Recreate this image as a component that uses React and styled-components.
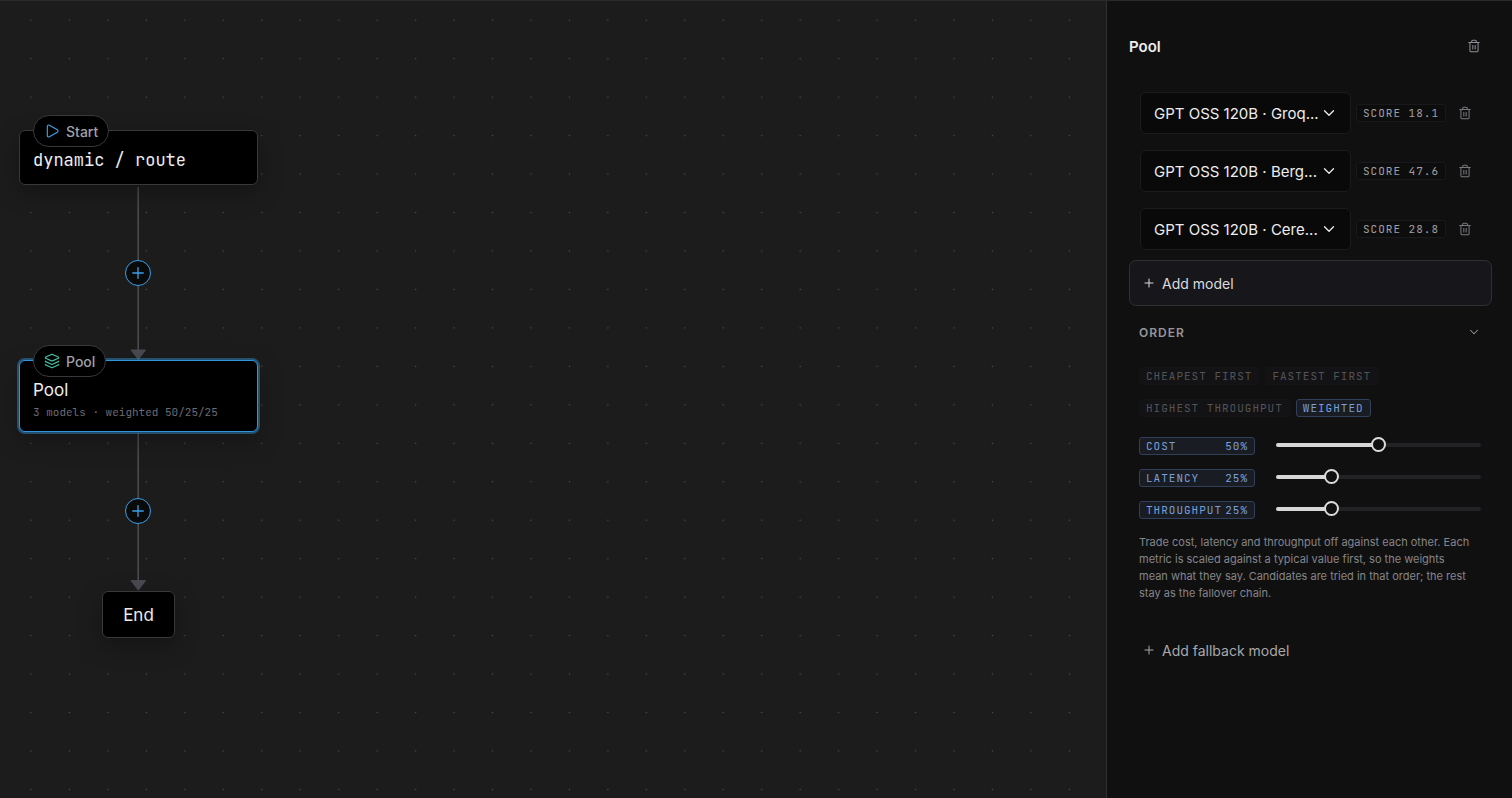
import React, { useState } from "react";
import styled, { createGlobalStyle, css } from "styled-components";
import { ChevronDown, Layers, Play, Plus, Trash2 } from "lucide-react";

const sans = `Inter, "Liberation Sans", sans-serif`;
const mono = `"JetBrains Mono", "DejaVu Sans Mono", "Liberation Mono", monospace`;

const GlobalStyle = createGlobalStyle`
  * {
    box-sizing: border-box;
  }
  body {
    margin: 0;
    background: #1c1c1c;
    color: #ededed;
    font-family: ${sans};
  }
  button, select, input {
    font: inherit;
    color: inherit;
    margin: 0;
  }
`;

const Page = styled.div`
  display: flex;
  min-height: 100vh;
  border-top: 1px solid #2a2a2a;
`;

const Canvas = styled.main`
  position: relative;
  flex: 1;
  min-width: 0;
  overflow: hidden;
`;

const Layer = styled.svg`
  position: absolute;
  top: 0;
  left: 0;
  width: 100%;
  height: 100%;
`;

const Node = styled.div`
  position: absolute;
  left: ${({ $x }) => $x}px;
  top: ${({ $y }) => $y}px;
  width: ${({ $wide }) => ($wide ? 239 : 73)}px;
  padding: ${({ $wide }) => ($wide ? "17px 13px 12px" : "11px 0 10px")};
  text-align: ${({ $wide }) => ($wide ? "left" : "center")};
  background: #000;
  border: 1px solid #38383d;
  border-radius: 6px;
  box-shadow: 0 8px 24px rgba(0, 0, 0, 0.3);
  ${({ $selected }) =>
    $selected &&
    css`
      border-color: #3294dc;
      box-shadow: 0 0 0 2px rgba(50, 148, 220, 0.45), 0 8px 24px rgba(0, 0, 0, 0.3);
    `}
`;

const NodePill = styled.div`
  position: absolute;
  left: 13px;
  top: -16px;
  display: flex;
  align-items: center;
  gap: 6px;
  height: 32px;
  padding: 0 10px;
  border: 1px solid #38383d;
  border-radius: 16px;
  background: #000;
  color: #a1a1aa;
  font-size: 14px;
  font-weight: 500;
`;

const NodeTitle = styled.div`
  font-family: ${({ $mono }) => ($mono ? mono : sans)};
  font-size: 17px;
  line-height: 24px;
  color: #ededed;
`;

const NodeMeta = styled.div`
  margin-top: 3px;
  font-family: ${mono};
  font-size: 11px;
  line-height: 14px;
  color: #6b6b73;
  white-space: nowrap;
`;

const InsertButton = styled.button`
  position: absolute;
  left: 125px;
  top: ${({ $y }) => $y}px;
  display: grid;
  place-items: center;
  width: 26px;
  height: 26px;
  padding: 0;
  border: 1px solid #3b9fe8;
  border-radius: 50%;
  background: #0a0a0a;
  color: #3b9fe8;
`;

const Panel = styled.aside`
  flex: none;
  width: 406px;
  padding: 29px 20px 29px 22px;
  border-left: 1px solid #303030;
  background: #101010;
`;

const PanelHeader = styled.header`
  display: flex;
  align-items: center;
  justify-content: space-between;
  height: 32px;
  padding-right: 4px;
`;

const PanelTitle = styled.h2`
  margin: 0;
  font-size: 15px;
  font-weight: 600;
`;

const IconButton = styled.button`
  display: grid;
  place-items: center;
  width: 28px;
  height: 28px;
  padding: 0;
  border: 0;
  background: none;
  color: ${({ $dim }) => ($dim ? "#77777e" : "#8e8e95")};
`;

const ModelList = styled.ul`
  display: flex;
  flex-direction: column;
  gap: 16px;
  margin: 30px 0 10px;
  padding: 0 13px 0 11px;
  list-style: none;
`;

const ModelRow = styled.li`
  display: flex;
  align-items: center;
  gap: 5px;
`;

const SelectWrap = styled.div`
  position: relative;
  flex: 1;
  min-width: 0;

  svg {
    position: absolute;
    right: 13px;
    top: 12px;
    pointer-events: none;
  }
`;

const ModelSelect = styled.select`
  appearance: none;
  display: block;
  width: 100%;
  height: 42px;
  padding: 0 30px 0 13px;
  border: 1px solid #1c1c1c;
  border-radius: 6px;
  background: #090909;
  color: #ededed;
  font-size: 15px;
`;

const tag = css`
  display: inline-flex;
  align-items: center;
  height: 18px;
  padding: 0 6px;
  border: 1px solid #19191c;
  border-radius: 3px;
  font-family: ${mono};
  font-size: 11px;
  letter-spacing: 1px;
  white-space: nowrap;
`;

const blueTag = css`
  border-color: #30405a;
  background: #191d23;
  color: #7a9fd9;
`;

const Score = styled.span`
  ${tag}
  color: #a0a0a4;
  background: #0d0d0d;
`;

const AddButton = styled.button`
  display: flex;
  align-items: center;
  gap: 6px;
  width: 100%;
  height: 46px;
  padding: 0 12px;
  border: 1px solid ${({ $filled }) => ($filled ? "#303032" : "transparent")};
  border-radius: 7px;
  background: ${({ $filled }) => ($filled ? "#17171b" : "none")};
  color: ${({ $filled }) => ($filled ? "#dcdcdf" : "#a8a8ac")};
  font-size: 14px;
`;

const Order = styled.section`
  padding: 0 11px 0 10px;
`;

const OrderToggle = styled.button`
  display: flex;
  align-items: center;
  justify-content: space-between;
  width: 100%;
  height: 52px;
  padding: 0;
  border: 0;
  background: none;
  color: #96969a;
  font-size: 12px;
  font-weight: 600;
  letter-spacing: 1px;
`;

const Strategies = styled.div`
  display: flex;
  flex-wrap: wrap;
  gap: 14px 6px;
  padding-top: 9px;
`;

const Strategy = styled.button`
  ${tag}
  border-color: #141416;
  background: #131315;
  color: #545458;
  ${({ $active }) => $active && blueTag}
`;

const Weights = styled.div`
  display: flex;
  flex-direction: column;
  gap: 14px;
  margin-top: 20px;
`;

const WeightRow = styled.div`
  display: grid;
  grid-template-columns: 116px 1fr;
  column-gap: 21px;
  height: 18px;
`;

const WeightLabel = styled.label`
  ${tag}
  ${blueTag}
  justify-content: space-between;
  align-self: end;
`;

const Slider = styled.input`
  appearance: none;
  width: 100%;
  height: 15px;
  background: none;

  &::-webkit-slider-runnable-track {
    height: 4px;
    border-radius: 2px;
    background: linear-gradient(to right, #d8d8d8 var(--fill), #222227 var(--fill));
  }
  &::-webkit-slider-thumb {
    appearance: none;
    width: 15px;
    height: 15px;
    margin-top: -6px;
    border: 2px solid #dcdcdc;
    border-radius: 50%;
    background: #101010;
  }
`;

const Hint = styled.p`
  margin: 15px 0 25px;
  padding-right: 7px;
  font-size: 11px;
  line-height: 17px;
  color: #85858b;
`;

const models = [
  { name: "GPT OSS 120B · Groq...", score: "18.1" },
  { name: "GPT OSS 120B · Berg...", score: "47.6" },
  { name: "GPT OSS 120B · Cere...", score: "28.8" },
];

const strategies = ["CHEAPEST FIRST", "FASTEST FIRST", "HIGHEST THROUGHPUT", "WEIGHTED"];

const Edges = () => (
  <Layer aria-hidden='true'>
    <defs>
      <pattern id='dots' x='11.8' y='0' width='38.46' height='38.46' patternUnits='userSpaceOnUse'>
        <circle cx='19.2' cy='19.2' r='0.8' fill='#4a4a4a' />
      </pattern>
    </defs>
    <rect width='100%' height='100%' fill='url(#dots)' />
    <path d='M138.2 186V350M138.2 432V581' stroke='#4a4a52' strokeWidth='1.6' />
    <path d='M131 349h14.6l-7.3 9.6zM131 579.6h14.6l-7.3 9.6z' fill='#4a4a52' stroke='#4a4a52' strokeLinejoin='round' />
  </Layer>
);

const App = () => {
  const [strategy, setStrategy] = useState("WEIGHTED");
  const [weights, setWeights] = useState({ COST: 50, LATENCY: 25, THROUGHPUT: 25 });

  return (
    <>
      <GlobalStyle />
      <Page>
        <Canvas>
          <Edges />
          <Node $x={19} $y={129} $wide>
            <NodePill>
              <Play size={16} strokeWidth={1.75} color='#3b9fe8' />
              Start
            </NodePill>
            <NodeTitle $mono>dynamic / route</NodeTitle>
          </Node>
          <InsertButton $y={259} aria-label='Insert node after Start'>
            <Plus size={18} strokeWidth={1.75} />
          </InsertButton>
          <Node $x={19} $y={359} $wide $selected>
            <NodePill>
              <Layers size={16} strokeWidth={1.75} color='#45c4a4' />
              Pool
            </NodePill>
            <NodeTitle>Pool</NodeTitle>
            <NodeMeta>3 models · weighted 50/25/25</NodeMeta>
          </Node>
          <InsertButton $y={497} aria-label='Insert node after Pool'>
            <Plus size={18} strokeWidth={1.75} />
          </InsertButton>
          <Node $x={102} $y={590}>
            <NodeTitle>End</NodeTitle>
          </Node>
        </Canvas>

        <Panel>
          <PanelHeader>
            <PanelTitle>Pool</PanelTitle>
            <IconButton aria-label='Delete pool'>
              <Trash2 size={14} strokeWidth={1.75} />
            </IconButton>
          </PanelHeader>

          <ModelList>
            {models.map((model) => (
              <ModelRow key={model.name}>
                <SelectWrap>
                  <ModelSelect aria-label='Model'>
                    <option>{model.name}</option>
                  </ModelSelect>
                  <ChevronDown size={18} strokeWidth={1.75} />
                </SelectWrap>
                <Score>SCORE {model.score}</Score>
                <IconButton $dim aria-label='Remove model'>
                  <Trash2 size={14} strokeWidth={1.75} />
                </IconButton>
              </ModelRow>
            ))}
          </ModelList>
          <AddButton $filled>
            <Plus size={14} strokeWidth={1.75} />
            Add model
          </AddButton>

          <Order>
            <OrderToggle aria-expanded='true'>
              ORDER
              <ChevronDown size={14} strokeWidth={1.75} />
            </OrderToggle>
            <Strategies>
              {strategies.map((name) => (
                <Strategy key={name} $active={name === strategy} onClick={() => setStrategy(name)}>
                  {name}
                </Strategy>
              ))}
            </Strategies>
            <Weights>
              {Object.entries(weights).map(([name, value]) => (
                <WeightRow key={name}>
                  <WeightLabel htmlFor={name}>
                    <span>{name}</span>
                    <span>{value}%</span>
                  </WeightLabel>
                  <Slider
                    id={name}
                    type='range'
                    min='0'
                    max='100'
                    value={value}
                    style={{ "--fill": `${value}%` }}
                    onChange={(e) => setWeights({ ...weights, [name]: Number(e.target.value) })}
                  />
                </WeightRow>
              ))}
            </Weights>
            <Hint>
              Trade cost, latency and throughput off against each other. Each metric is scaled against a typical value first, so the
              weights mean what they say. Candidates are tried in that order; the rest stay as the fallover chain.
            </Hint>
          </Order>
          <AddButton>
            <Plus size={14} strokeWidth={1.75} />
            Add fallback model
          </AddButton>
        </Panel>
      </Page>
    </>
  );
};

export default App;
